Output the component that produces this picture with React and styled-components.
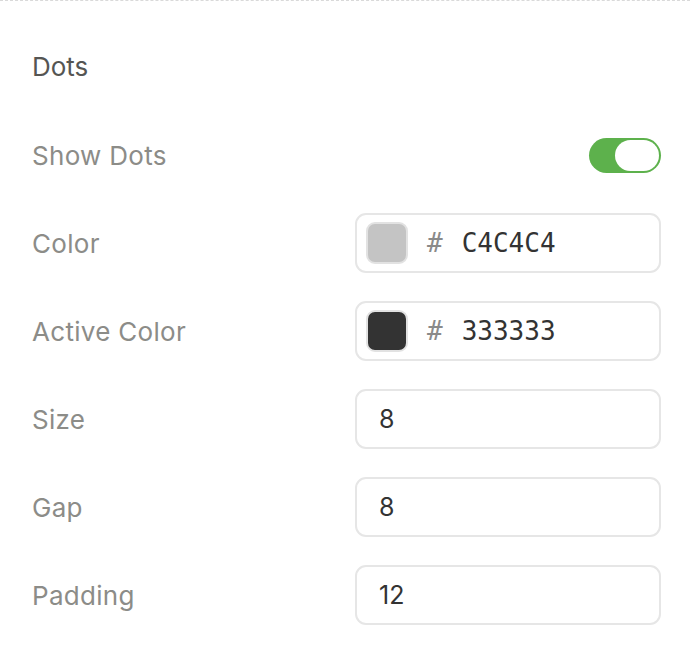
import React, { useState } from "react";
import styled, { createGlobalStyle } from "styled-components";

const GlobalStyle = createGlobalStyle`
  html, body {
    margin: 0;
    padding: 0;
    background: #ffffff;
  }
  body {
    font-family: Inter, "Noto Sans", "Liberation Sans", sans-serif;
  }
`;

const Panel = styled.section`
  width: 690px;
  height: 648px;
  box-sizing: border-box;
  border-top: 1px dashed #d9d9d9;
  padding: 0 29px 0 32px;
  display: flex;
  flex-direction: column;
`;

const Title = styled.h2`
  margin: 0;
  height: 124px;
  padding-top: 48px;
  box-sizing: border-box;
  font-size: 26px;
  line-height: 36px;
  font-weight: 400;
  color: #555553;
`;

const Rows = styled.div`
  display: flex;
  flex-direction: column;
  gap: 28px;
`;

const Row = styled.div`
  height: 60px;
  display: flex;
  align-items: center;
  justify-content: space-between;
`;

const Label = styled.span`
  font-size: 26px;
  letter-spacing: 0.3px;
  color: #8c8c88;
`;

const Field = styled.div`
  width: 306px;
  height: 60px;
  box-sizing: border-box;
  border: 2px solid #e6e6e6;
  border-radius: 11px;
  display: flex;
  align-items: center;
  padding: 0 9px;
`;

const NumberInput = styled.input`
  border: none;
  outline: none;
  width: 100%;
  padding: 0 0 0 13px;
  background: transparent;
  font-family: Inter, "Noto Sans", "Liberation Sans", sans-serif;
  font-size: 25px;
  color: #333333;
`;

const Swatch = styled.span`
  width: 42px;
  height: 42px;
  box-sizing: border-box;
  border-radius: 9px;
  border: 2px solid #e2e2e2;
  background: ${(p) => p.$color};
  flex: none;
`;

const Hash = styled.span`
  margin-left: 19px;
  font-family: "DejaVu Sans Mono", "Liberation Mono", monospace;
  font-size: 26px;
  color: #8a8a8a;
`;

const HexValue = styled.span`
  margin-left: 19px;
  font-family: "DejaVu Sans Mono", "Liberation Mono", monospace;
  font-size: 26px;
  color: #333333;
`;

const Track = styled.button`
  width: 72px;
  height: 35px;
  box-sizing: border-box;
  border: none;
  border-radius: 18px;
  padding: 2px;
  background: ${(p) => (p.$on ? "#5db14c" : "#d5d5d5")};
  display: flex;
  justify-content: ${(p) => (p.$on ? "flex-end" : "flex-start")};
  cursor: pointer;
`;

const Knob = styled.span`
  width: 44px;
  height: 31px;
  border-radius: 16px;
  background: #ffffff;
`;

function ColorField({ color }) {
  return (
    <Field>
      <Swatch $color={"#" + color} />
      <Hash>#</Hash>
      <HexValue>{color}</HexValue>
    </Field>
  );
}

export default function App() {
  const [showDots, setShowDots] = useState(true);
  const [size, setSize] = useState("8");
  const [gap, setGap] = useState("8");
  const [padding, setPadding] = useState("12");

  return (
    <>
      <GlobalStyle />
      <Panel>
        <Title>Dots</Title>
        <Rows>
          <Row>
            <Label>Show Dots</Label>
            <Track $on={showDots} onClick={() => setShowDots(!showDots)}>
              <Knob />
            </Track>
          </Row>
          <Row>
            <Label>Color</Label>
            <ColorField color="C4C4C4" />
          </Row>
          <Row>
            <Label>Active Color</Label>
            <ColorField color="333333" />
          </Row>
          <Row>
            <Label>Size</Label>
            <Field>
              <NumberInput value={size} onChange={(e) => setSize(e.target.value)} />
            </Field>
          </Row>
          <Row>
            <Label>Gap</Label>
            <Field>
              <NumberInput value={gap} onChange={(e) => setGap(e.target.value)} />
            </Field>
          </Row>
          <Row>
            <Label>Padding</Label>
            <Field>
              <NumberInput value={padding} onChange={(e) => setPadding(e.target.value)} />
            </Field>
          </Row>
        </Rows>
      </Panel>
    </>
  );
}
